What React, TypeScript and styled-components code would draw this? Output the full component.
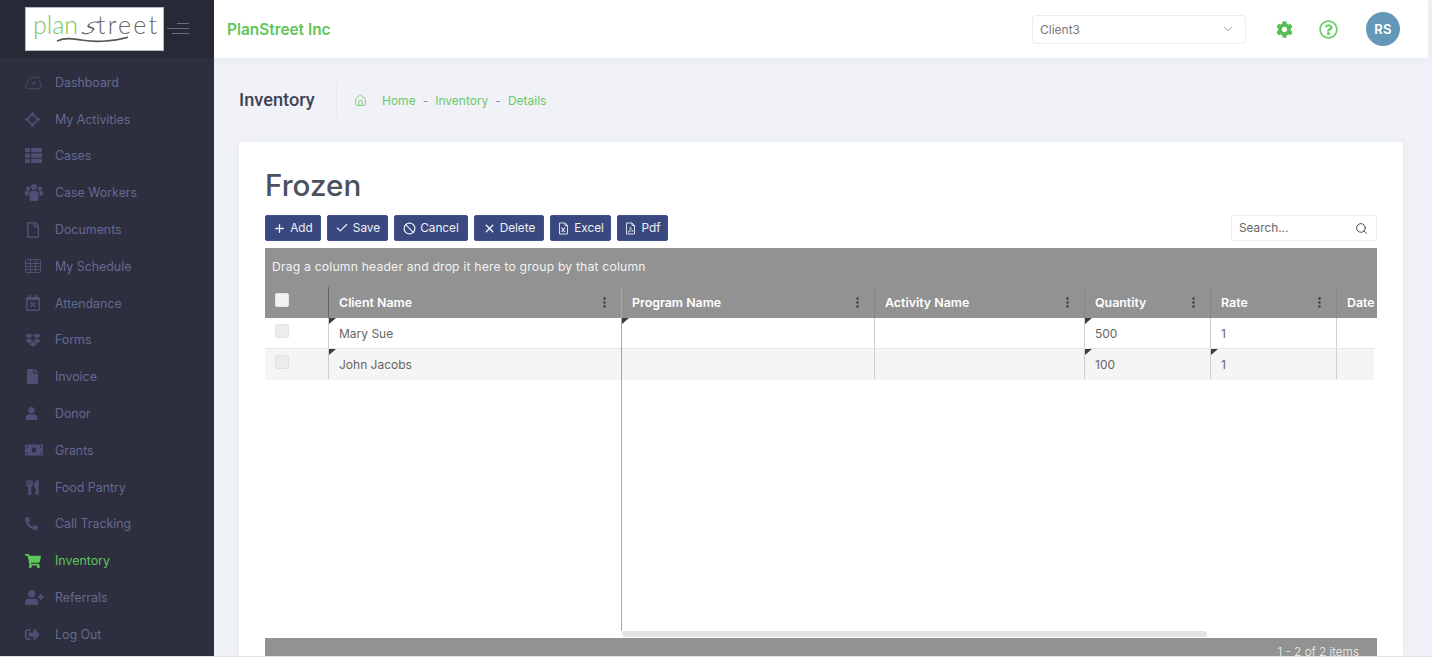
import type {ReactNode} from 'react';
import styled, {createGlobalStyle} from 'styled-components';
import {
  FaCog,
  FaDropbox,
  FaFile,
  FaMoneyBill,
  FaPhoneAlt,
  FaRegCalendarTimes,
  FaRegFile,
  FaRegQuestionCircle,
  FaShoppingCart,
  FaSignOutAlt,
  FaThList,
  FaUser,
  FaUserPlus,
  FaUtensils,
} from 'react-icons/fa';
import {BsThreeDotsVertical} from 'react-icons/bs';
import {Ban, Check, ChevronDown, Home, Plus, Search, X} from 'lucide-react';

const GREEN = '#5fc65a';
const UI_FONT = `Inter, "Open Sans", "Liberation Sans", sans-serif`;

const GlobalStyle = createGlobalStyle`
  html, body {
    margin: 0;
    padding: 0;
    overflow: hidden;
    background: #fff;
  }
  * {
    box-sizing: border-box;
  }
`;

const Page = styled.div`
  width: 1432px;
  height: 659px;
  overflow: hidden;
  display: flex;
  flex-direction: column;
  font-family: ${UI_FONT};
`;

const Shell = styled.div`
  height: 657px;
  display: flex;
  overflow: hidden;
  background: #f0f2f8;
  border-bottom: 1px solid #e4e4e6;
`;

const Sidebar = styled.aside`
  width: 214px;
  flex: none;
  background: #2d2e3e;
  display: flex;
  flex-direction: column;
`;

const Brand = styled.div`
  height: 58px;
  background: #282937;
  display: flex;
  align-items: flex-start;
  padding: 7px 0 0 25px;
  gap: 3px;
`;

const LogoBox = styled.div`
  width: 139px;
  height: 44px;
  background: #fff;
  border: 1px solid #b9b9c0;
`;

const Burger = styled.div`
  display: flex;
  flex-direction: column;
  align-items: flex-end;
  gap: 4px;
  width: 22px;
  margin-top: 16px;
`;

const BurgerLine = styled.span<{$w: number}>`
  display: block;
  width: ${p => p.$w}px;
  height: 1px;
  background: #686b84;
`;

const Nav = styled.nav`
  display: flex;
  flex-direction: column;
  padding: 6px 0 0 25px;
`;

const NavItem = styled.a<{$active?: boolean}>`
  height: 36.8px;
  display: flex;
  align-items: center;
  font-size: 12.4px;
  color: ${p => (p.$active ? GREEN : '#646a92')};
  svg {
    color: ${p => (p.$active ? GREEN : '#4c5074')};
  }
`;

const NavIcon = styled.span`
  width: 30px;
  flex: none;
  display: flex;
  align-items: center;
`;

const Content = styled.div`
  flex: 1;
  min-width: 0;
  display: flex;
  flex-direction: column;
  padding-right: 4px;
`;

const TopBar = styled.header`
  height: 58px;
  flex: none;
  background: #fff;
  box-shadow: 0 2px 10px rgba(80, 85, 120, 0.08);
  display: flex;
  align-items: center;
  padding: 0 28px 0 13px;
`;

const CompanyName = styled.div`
  flex: 1;
  color: ${GREEN};
  font-size: 15.4px;
  font-weight: 600;
`;

const ClientSelect = styled.div`
  width: 214px;
  height: 29px;
  border: 1px solid #ececee;
  border-radius: 4px;
  display: flex;
  align-items: center;
  justify-content: space-between;
  padding: 0 10px 0 7px;
  font-size: 12px;
  color: #777;
`;

const TopIcons = styled.div`
  display: flex;
  align-items: center;
  margin-left: 30px;
`;

const GearSlot = styled.span`
  display: flex;
  color: #58bd52;
`;

const HelpSlot = styled.span`
  display: flex;
  color: #6ccf66;
  margin-left: 26px;
`;

const Avatar = styled.div`
  width: 34px;
  height: 34px;
  border-radius: 50%;
  background: #6497b8;
  color: #fff;
  font-size: 13px;
  font-weight: 600;
  letter-spacing: 0.3px;
  display: flex;
  align-items: center;
  justify-content: center;
  margin-left: 28px;
`;

const SubHeader = styled.div`
  height: 84px;
  flex: none;
  display: flex;
  align-items: center;
  padding-left: 25px;
`;

const PageTitle = styled.h2`
  margin: 0;
  width: 98px;
  height: 33px;
  line-height: 31px;
  font-family: Roboto, "Liberation Sans", sans-serif;
  font-size: 18.2px;
  font-weight: 500;
  color: #3f4254;
  border-right: 1px solid #e6e8ef;
`;

const Crumbs = styled.div`
  display: flex;
  align-items: center;
  margin-left: 17px;
  color: #6cc766;
  font-size: 12px;
`;

const CrumbSep = styled.span`
  margin: 0 7px;
  color: #8a8fa5;
`;

const HomeSlot = styled.span`
  display: flex;
  margin-right: 15px;
`;

const Card = styled.main`
  flex: 1;
  min-height: 0;
  margin: 0 25px 0 25px;
  padding: 25px 0 0 26px;
  background: #fff;
  border-radius: 3px 3px 0 0;
  box-shadow: 0 0 12px rgba(80, 85, 120, 0.05);
  overflow: hidden;
`;

const CardTitle = styled.h1`
  margin: 0;
  height: 48px;
  line-height: 36px;
  font-size: 29.6px;
  font-weight: 500;
  color: #4c5160;
`;

const ToolRow = styled.div`
  width: 1112px;
  height: 26px;
  display: flex;
  align-items: center;
  gap: 6px;
`;

const ToolButton = styled.button<{$w: number}>`
  width: ${p => p.$w}px;
  height: 26px;
  padding: 0;
  border: 1px solid #42528a;
  border-radius: 2px;
  background: #39487f;
  color: #eef0f6;
  font-family: ${UI_FONT};
  font-size: 11.8px;
  display: flex;
  align-items: center;
  justify-content: center;
  gap: 4px;
`;

const SearchBox = styled.div`
  width: 146px;
  height: 26px;
  margin-left: auto;
  border: 1px solid #eeeeee;
  border-radius: 2px;
  display: flex;
  align-items: center;
  justify-content: space-between;
  padding: 0 8px 0 7px;
  font-size: 11.8px;
  color: #666;
`;

const Grid = styled.section`
  width: 1112px;
  margin-top: 7px;
`;

const GroupBar = styled.div`
  height: 39px;
  background: #929292;
  color: #f2f2f2;
  font-size: 12.2px;
  letter-spacing: 0.18px;
  display: flex;
  align-items: center;
  padding: 0 0 2px 7px;
`;

const GridBody = styled.div`
  height: 351px;
  display: flex;
  align-items: flex-start;
`;

const FrozenPane = styled.div`
  width: 357px;
  height: 344px;
  flex: none;
  border-right: 1px solid #a8a8a8;
`;

const ScrollPane = styled.div`
  flex: 1;
  height: 351px;
  min-width: 0;
  display: flex;
  flex-direction: column;
`;

const HeadRow = styled.div`
  height: 31px;
  background: #929292;
  display: flex;
`;

const BodyRow = styled.div<{$alt?: boolean; $trim?: boolean}>`
  height: 31px;
  display: flex;
  background: ${p => (p.$alt ? '#f5f5f5' : '#fff')};
  border-bottom: 1px solid ${p => (p.$alt ? '#f5f5f5' : '#e6e6e6')};
  margin-right: ${p => (p.$trim ? 3 : 0)}px;
`;

const HeadCell = styled.div<{$w: number; $first?: boolean; $bare?: boolean}>`
  width: ${p => p.$w}px;
  flex: none;
  overflow: hidden;
  white-space: nowrap;
  border-left: ${p => (p.$bare ? 'none' : `1px solid ${p.$first ? '#666' : '#858585'}`)};
  display: flex;
  align-items: center;
  justify-content: space-between;
  padding: 0 10px 1px 10px;
  color: #fff;
  font-size: 12.4px;
  font-weight: 600;
  svg {
    flex: none;
    color: #3a3a3a;
  }
`;

const CheckCell = styled.div<{$w: number}>`
  width: ${p => p.$w}px;
  flex: none;
  display: flex;
  align-items: flex-start;
  padding: 6px 0 0 10px;
`;

const Tick = styled.span<{$head?: boolean}>`
  width: 14px;
  height: 14px;
  border-radius: 2px;
  border: 1px solid ${p => (p.$head ? '#e4e4e4' : '#e2e2e2')};
  background: ${p => (p.$head ? '#f2f2f2' : '#ececec')};
`;

const Cell = styled.div<{$w: number; $dirty?: boolean; $bare?: boolean}>`
  position: relative;
  width: ${p => p.$w}px;
  flex: none;
  border-left: ${p => (p.$bare ? 'none' : '1px solid #cfcfcf')};
  display: flex;
  align-items: center;
  padding-left: 10px;
  font-size: 12px;
  color: #666;
  &::before {
    content: '';
    display: ${p => (p.$dirty ? 'block' : 'none')};
    position: absolute;
    top: 0;
    left: 0;
    border-top: 6px solid #3c3c3c;
    border-right: 7px solid transparent;
  }
`;

const PaneSpacer = styled.div`
  flex: 1;
`;

const ScrollTrack = styled.div`
  height: 6px;
  flex: none;
  margin-bottom: 1px;
`;

const ScrollThumb = styled.div`
  width: 585px;
  height: 6px;
  border-radius: 3px;
  background: #e3e3e3;
`;

const Pager = styled.footer`
  height: 22px;
  background: #929292;
  color: #f2f2f2;
  font-size: 11.8px;
  font-weight: 300;
  display: flex;
  justify-content: flex-end;
  padding: 7px 18px 0 0;
`;

const BottomEdge = styled.div`
  height: 2px;
  background: #fff;
`;

function GaugeIcon() {
  return (
    <svg width="17" height="15" viewBox="0 0 17 15" fill="none" stroke="currentColor" strokeWidth="0.9">
      <path d="M1 13.5C.4 8 3.5 2.5 9 2.2c1.3 0 2.4.3 3.3.8" />
      <path d="M14.2 5c1.600 2.400 2 5.600 1.600 8.500" />
      <path d="M1.500 13.800h14" />
      <path d="M13 1.500 14.500 3" />
      <path d="M7.600 9.600 10 7" strokeWidth="1.400" />
    </svg>
  );
}

function TargetIcon() {
  return (
    <svg width="15" height="15" viewBox="0 0 15 15" fill="currentColor">
      <path d="M7.500 2 13 7.500 7.500 13 2 7.500z" fill="none" stroke="currentColor" strokeWidth="1.600" />
      <rect x="6.600" y="0" width="1.800" height="4" />
      <rect x="6.600" y="11" width="1.800" height="4" />
      <rect x="0" y="6.600" width="4" height="1.800" />
      <rect x="11" y="6.600" width="4" height="1.800" />
    </svg>
  );
}

function GroupIcon() {
  return (
    <svg width="18" height="17" viewBox="0 0 18 17" fill="currentColor">
      <circle cx="9" cy="3" r="3" />
      <circle cx="3" cy="4.500" r="2.200" />
      <circle cx="15" cy="4.500" r="2.200" />
      <path d="M0 8.500C0 7.500.8 7 2 7h2c-.2.500-.5 1-.5 2v2.500H1c-.6 0-1-.4-1-1z" />
      <path d="M18 8.500c0-1-.8-1.500-2-1.500h-2c.2.500.5 1 .5 2v2.500H17c.6 0 1-.4 1-1z" />
      <path d="M4.500 9.500c0-1.500 1-2.500 2.500-2.500h4c1.500 0 2.500 1 2.500 2.500V15c0 1-.8 2-2 2h-5c-1.200 0-2-1-2-2z" />
    </svg>
  );
}

function ScheduleIcon() {
  return (
    <svg width="16" height="14" viewBox="0 0 16 14" fill="none" stroke="currentColor" strokeWidth="1">
      <rect x="0.500" y="0.500" width="15" height="13" rx="1" />
      <path d="M0.500 4.500h15M0.500 7.500h15M0.500 10.500h15M5.500 0.500v13M10.500 0.500v13" />
    </svg>
  );
}

function ExcelIcon() {
  return (
    <svg width="13" height="13" viewBox="0 0 13 13" fill="none" stroke="currentColor" strokeWidth="0.9">
      <path d="M2.500 1h5.500l2.500 2.500V12h-8z" />
      <path d="M8 1v2.500h2.500" />
      <path d="M4.500 5.500l3.500 4.500M8 5.500 4.500 10" strokeWidth="1.100" />
    </svg>
  );
}

function PdfIcon() {
  return (
    <svg width="13" height="13" viewBox="0 0 13 13" fill="none" stroke="currentColor" strokeWidth="0.9">
      <path d="M2.500 1h5.500l2.500 2.500V12h-8z" />
      <path d="M8 1v2.500h2.500" />
      <path d="M4 10c1.500-1 2.200-3 2.200-4.600 0-.6.6-.6.6 0 0 1.700 1.100 3 2.400 3.300.4.100.3.600-.2.500-1.800-.3-3.200 0-4.300 1.100z" strokeWidth="0.700" />
    </svg>
  );
}

function PlanStreetLogo() {
  return (
    <svg width="137" height="42" viewBox="0 0 137 42">
      <text x="7" y="26" fontFamily="Lato, sans-serif" fontWeight="300" fontSize="25" fill="#7cc45a" textLength="45">
        plan
      </text>
      <text
        transform="translate(53 26) skewX(-38) scale(1.25 1)"
        fontFamily="Lato, sans-serif"
        fontWeight="300"
        fontSize="25"
        fill="#555">
        s
      </text>
      <text x="71" y="26" fontFamily="Lato, sans-serif" fontWeight="300" fontSize="25" fill="#666" textLength="60">
        treet
      </text>
      <path d="M31 33c8-3.500 16-2.500 26-.8 10 1.700 28 2 45-3" fill="none" stroke="#555" strokeWidth="1.600" />
    </svg>
  );
}

const NAV_ITEMS: {label: string; icon: ReactNode; active?: boolean}[] = [
  {label: 'Dashboard', icon: <GaugeIcon />},
  {label: 'My Activities', icon: <TargetIcon />},
  {label: 'Cases', icon: <FaThList size={17} />},
  {label: 'Case Workers', icon: <GroupIcon />},
  {label: 'Documents', icon: <FaRegFile size={16} />},
  {label: 'My Schedule', icon: <ScheduleIcon />},
  {label: 'Attendance', icon: <FaRegCalendarTimes size={16} />},
  {label: 'Forms', icon: <FaDropbox size={16} />},
  {label: 'Invoice', icon: <FaFile size={15} />},
  {label: 'Donor', icon: <FaUser size={13} />},
  {label: 'Grants', icon: <FaMoneyBill size={18} />},
  {label: 'Food Pantry', icon: <FaUtensils size={15} />},
  {label: 'Call Tracking', icon: <FaPhoneAlt size={13} />},
  {label: 'Inventory', icon: <FaShoppingCart size={16} />, active: true},
  {label: 'Referrals', icon: <FaUserPlus size={19} />},
  {label: 'Log Out', icon: <FaSignOutAlt size={15} />},
];

const COLUMNS = [
  {title: 'Program Name', w: 252},
  {title: 'Activity Name', w: 210},
  {title: 'Quantity', w: 126},
  {title: 'Rate', w: 126},
  {title: 'Date', w: 41},
];

const ROWS = [
  {name: 'Mary Sue', qty: '500', rate: '1', programDirty: true, rateDirty: false},
  {name: 'John Jacobs', qty: '100', rate: '1', programDirty: false, rateDirty: true},
];

export default function App() {
  return (
    <Page>
      <GlobalStyle />
      <Shell>
        <Sidebar>
          <Brand>
            <LogoBox>
              <PlanStreetLogo />
            </LogoBox>
            <Burger>
              <BurgerLine $w={12} />
              <BurgerLine $w={22} />
              <BurgerLine $w={17} />
            </Burger>
          </Brand>
          <Nav>
            {NAV_ITEMS.map(item => (
              <NavItem key={item.label} $active={item.active}>
                <NavIcon>{item.icon}</NavIcon>
                {item.label}
              </NavItem>
            ))}
          </Nav>
        </Sidebar>
        <Content>
          <TopBar>
            <CompanyName>PlanStreet Inc</CompanyName>
            <ClientSelect>
              Client3
              <ChevronDown size={14} strokeWidth={1.2} color="#777" />
            </ClientSelect>
            <TopIcons>
              <GearSlot>
                <FaCog size={17} />
              </GearSlot>
              <HelpSlot>
                <FaRegQuestionCircle size={19} />
              </HelpSlot>
              <Avatar>RS</Avatar>
            </TopIcons>
          </TopBar>
          <SubHeader>
            <PageTitle>Inventory</PageTitle>
            <Crumbs>
              <HomeSlot>
                <Home size={13} strokeWidth={1.5} />
              </HomeSlot>
              Home
              <CrumbSep>-</CrumbSep>
              Inventory
              <CrumbSep>-</CrumbSep>
              Details
            </Crumbs>
          </SubHeader>
          <Card>
            <CardTitle>Frozen</CardTitle>
            <ToolRow>
              <ToolButton $w={56}>
                <Plus size={13} strokeWidth={2.4} />
                Add
              </ToolButton>
              <ToolButton $w={61}>
                <Check size={14} strokeWidth={2} />
                Save
              </ToolButton>
              <ToolButton $w={74}>
                <Ban size={13} strokeWidth={2.2} />
                Cancel
              </ToolButton>
              <ToolButton $w={70}>
                <X size={13} strokeWidth={2.6} />
                Delete
              </ToolButton>
              <ToolButton $w={61}>
                <ExcelIcon />
                Excel
              </ToolButton>
              <ToolButton $w={51}>
                <PdfIcon />
                Pdf
              </ToolButton>
              <SearchBox>
                Search...
                <Search size={13} strokeWidth={1.6} color="#333" />
              </SearchBox>
            </ToolRow>
            <Grid>
              <GroupBar>Drag a column header and drop it here to group by that column</GroupBar>
              <GridBody>
                <FrozenPane>
                  <HeadRow>
                    <CheckCell $w={63}>
                      <Tick $head />
                    </CheckCell>
                    <HeadCell $w={293} $first>
                      Client Name
                      <BsThreeDotsVertical size={13} />
                    </HeadCell>
                  </HeadRow>
                  {ROWS.map((row, i) => (
                    <BodyRow key={row.name} $alt={i === 1}>
                      <CheckCell $w={63}>
                        <Tick />
                      </CheckCell>
                      <Cell $w={293} $dirty>
                        {row.name}
                      </Cell>
                    </BodyRow>
                  ))}
                </FrozenPane>
                <ScrollPane>
                  <HeadRow>
                    {COLUMNS.map((col, i) => (
                      <HeadCell key={col.title} $w={col.w} $bare={i === 0}>
                        {col.title}
                        {col.title !== 'Date' && <BsThreeDotsVertical size={13} />}
                      </HeadCell>
                    ))}
                  </HeadRow>
                  {ROWS.map((row, i) => (
                    <BodyRow key={row.name} $alt={i === 1} $trim>
                      <Cell $w={252} $dirty={row.programDirty} $bare />
                      <Cell $w={210} />
                      <Cell $w={126} $dirty>
                        {row.qty}
                      </Cell>
                      <Cell $w={126} $dirty={row.rateDirty}>
                        {row.rate}
                      </Cell>
                      <Cell $w={38} />
                    </BodyRow>
                  ))}
                  <PaneSpacer />
                  <ScrollTrack>
                    <ScrollThumb />
                  </ScrollTrack>
                </ScrollPane>
              </GridBody>
              <Pager>1 - 2 of 2 items</Pager>
            </Grid>
          </Card>
        </Content>
      </Shell>
      <BottomEdge />
    </Page>
  );
}
